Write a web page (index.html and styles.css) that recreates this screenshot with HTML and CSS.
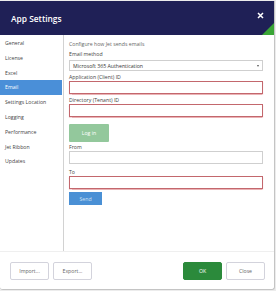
FILE: index.html
```html
<!DOCTYPE html>
<html>
<head>
<meta charset="utf-8">
<link rel="stylesheet" href="styles.css">
</head>
<body>
<div class="dialog">
  <div class="header">
    <div class="title">App Settings</div>
    <svg class="close" width="7" height="7" viewBox="0 0 7 7"><path d="M1 1L6 6M6 1L1 6" stroke="#fff" stroke-width="1.5" fill="none"/></svg>
    <div class="corner"></div>
  </div>
  <div class="main">
    <div class="sidebar">
      <div class="nav-item">General</div>
      <div class="nav-item">License</div>
      <div class="nav-item">Excel</div>
      <div class="nav-item active">Email</div>
      <div class="nav-item">Settings Location</div>
      <div class="nav-item">Logging</div>
      <div class="nav-item">Performance</div>
      <div class="nav-item">Jet Ribbon</div>
      <div class="nav-item">Updates</div>
    </div>
    <div class="content">
      <div class="intro">Configure how Jet sends emails</div>
      <div class="label l-method">Email method</div>
      <div class="select"><span>Microsoft 365 Authentication</span><span class="arrow"></span></div>
      <div class="label l-gap">Application (Client) ID</div>
      <div class="input invalid"></div>
      <div class="label l-gap">Directory (Tenant) ID</div>
      <div class="input invalid"></div>
      <div class="btn-login">Log in</div>
      <div class="label l-from">From</div>
      <div class="input"></div>
      <div class="label l-to">To</div>
      <div class="input invalid"></div>
      <div class="btn-send">Send</div>
    </div>
  </div>
  <div class="footer">
    <div class="btn">Import...</div>
    <div class="btn">Export...</div>
    <div class="spacer"></div>
    <div class="btn ok">OK</div>
    <div class="btn">Close</div>
  </div>
</div>
</body>
</html>
```

FILE: styles.css
```css
* { box-sizing: border-box; }
html, body { margin: 0; padding: 0; }
body {
  background: #ececec;
  width: 276px;
  height: 291px;
  overflow: hidden;
  font-family: "Open Sans", "Liberation Sans", sans-serif;
  font-size: 5.2px;
  color: #444;
}
.dialog {
  margin-top: 1px;
  width: 275px;
  height: 289px;
  background: #fff;
  border-right: 1px solid #c4c4c4;
  border-bottom: 1px solid #c4c4c4;
  border-radius: 0 0 3px 3px;
  display: flex;
  flex-direction: column;
  overflow: hidden;
}
.header {
  position: relative;
  height: 34px;
  flex: none;
  background: #1f2056;
  display: flex;
  align-items: center;
  padding-left: 11px;
  padding-right: 10px;
}
.title {
  color: #fff;
  font-weight: 600;
  font-size: 8.4px;
  padding-top: 1px;
}
.close {
  margin-left: auto;
  align-self: flex-start;
  margin-top: 11px;
}
.corner {
  position: absolute;
  right: 0;
  bottom: 0;
  width: 0;
  height: 0;
  border-left: 12px solid transparent;
  border-bottom: 12px solid #3aa536;
}
.main {
  flex: 1;
  display: flex;
  min-height: 0;
}
.sidebar {
  width: 64px;
  flex: none;
  border-right: 1px solid #d2d2d2;
  padding-top: 1px;
}
.nav-item {
  height: 14.8px;
  line-height: 14.8px;
  padding-left: 5px;
  color: #444;
  white-space: nowrap;
}
.nav-item.active {
  background: #4a8fd8;
  color: #fff;
  margin-right: 1px;
}
.content {
  flex: 1;
  padding: 6px 11px 0 5px;
  display: flex;
  flex-direction: column;
  align-items: stretch;
}
.intro {
  line-height: 7px;
  color: #666;
}
.label {
  line-height: 7px;
  color: #444;
}
.l-method { margin-top: 3px; margin-bottom: 2px; }
.l-gap { margin-top: 3px; }
.l-from { margin-top: 2px; }
.l-to { margin-top: 5px; }
.select {
  height: 11px;
  border: 1px solid #cfcfcf;
  display: flex;
  align-items: center;
  padding: 0 3px;
  color: #333;
}
.arrow {
  margin-left: auto;
  width: 0;
  height: 0;
  border-left: 1.5px solid transparent;
  border-right: 1.5px solid transparent;
  border-top: 2px solid #555;
}
.input {
  height: 13px;
  border: 1px solid #cfcfcf;
}
.input.invalid {
  border-color: #c3676d;
  box-shadow: 0 0.5px 1px #eab2b5;
}
.btn-login {
  margin-top: 7px;
  width: 40px;
  height: 18px;
  background: #93c89c;
  color: #fff;
  border-radius: 1px;
  display: flex;
  align-items: center;
  justify-content: center;
}
.btn-send {
  margin-top: 3px;
  width: 33px;
  height: 13px;
  background: #4a90d5;
  color: #cfe0f4;
  display: flex;
  align-items: center;
  justify-content: center;
}
.footer {
  flex: none;
  height: 38px;
  border-top: 1px solid #efefef;
  display: flex;
  align-items: flex-start;
  padding: 10px 9px 0 10px;
  gap: 4px;
}
.spacer { flex: 1; }
.btn {
  width: 39px;
  height: 18px;
  border: 1px solid #d3d3dc;
  border-radius: 2px;
  background: #fff;
  color: #666;
  display: flex;
  align-items: center;
  justify-content: center;
}
.btn.ok {
  background: #2b8a3b;
  border-color: #2b8a3b;
  color: #fff;
}
```
